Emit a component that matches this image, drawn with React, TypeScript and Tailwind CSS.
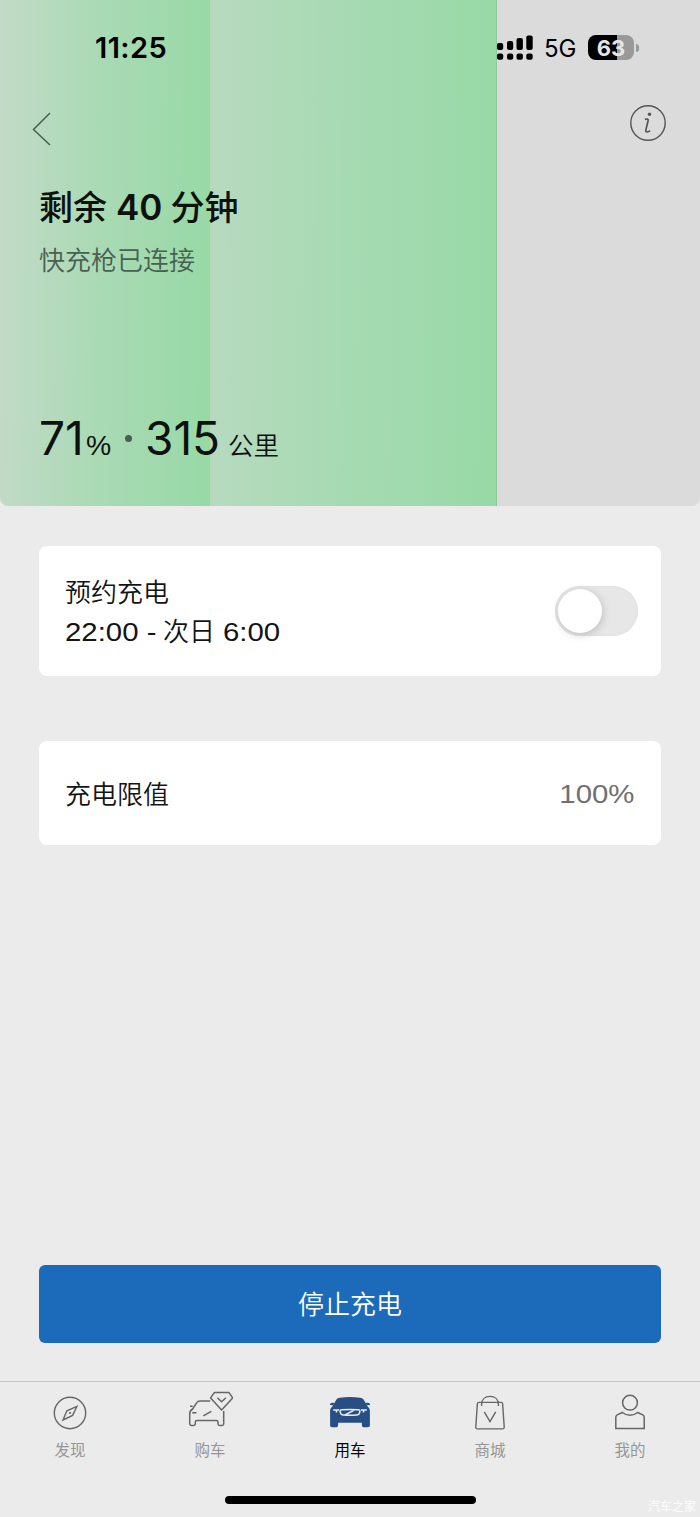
import { useState } from "react";
import type { ReactNode } from "react";
import * as Switch from "@radix-ui/react-switch";
import clsx from "clsx";

const StatusBar = () => {
  return (
    <div className="flex h-[96px] justify-between pl-[95px] pr-[61px] text-black">
      <span className="h-[96px] text-[29px] font-semibold leading-[96px] tracking-[0.4px]">
        11:25
      </span>
      <div className="flex h-[96px] items-center">
        <svg width="37" height="26" viewBox="0 0 37 26" className="mr-[10px]">
          <rect x="0" y="8" width="6.2" height="7" rx="2" />
          <rect x="10" y="6" width="6.2" height="9" rx="2" />
          <rect x="19.5" y="3" width="6.4" height="12" rx="2" />
          <rect x="29.3" y="0.5" width="6.4" height="14.5" rx="2" />
          <rect x="0" y="18.5" width="6.2" height="6.2" rx="2" />
          <rect x="10" y="18.5" width="6.2" height="6.2" rx="2" />
          <rect x="19.5" y="18.5" width="6.4" height="6.2" rx="2" />
          <rect x="29.3" y="18.5" width="6.4" height="6.2" rx="2" />
        </svg>
        <span className="mr-[12px] mt-[2px] w-[32px] text-[24px] leading-6">5G</span>
        <div className="-mt-px flex h-[25px] w-[46px] items-center justify-center rounded-[8px] bg-[linear-gradient(90deg,#000_64%,#999_64%)] text-[22px] font-bold leading-none text-[#e6e6e6]">
          63
        </div>
        <div className="ml-[2px] h-[8px] w-[3px] rounded-r-full bg-[#999]" />
      </div>
    </div>
  );
};

const ChargeHeader = () => {
  return (
    <header className="relative isolate h-[506px] overflow-hidden rounded-b-[8px] bg-[#dbdbdb]">
      {/* battery level behind the texts */}
      <div className="absolute inset-y-0 left-0 -z-10 flex w-[497px]">
        <div className="w-[210px] bg-[linear-gradient(90.5deg,#c3dac8_0%,#a9dab4_48%,#98d9a6_100%)]" />
        <div className="flex-1 border-r border-[#8dc899] bg-[linear-gradient(90.5deg,#b7dabf_0%,#a6dab2_50%,#98d9a6_100%)]" />
      </div>

      <StatusBar />

      <div className="flex h-[60px] items-start justify-between pl-[32px] pr-[34px] text-[#555]">
        <button type="button" aria-label="返回" className="mt-[16px]">
          <svg width="20" height="34" viewBox="0 0 20 34" fill="none" stroke="#486050" strokeWidth="1.5">
            <path d="M18 1 1.5 17.5 18 33" />
          </svg>
        </button>
        <button type="button" aria-label="说明" className="mt-[9px]">
          <svg width="36" height="36" viewBox="0 0 36 36" fill="none" stroke="#555">
            <circle cx="18" cy="18" r="17.2" strokeWidth="1.4" />
            <circle cx="19.5" cy="9.3" r="1.7" fill="#555" stroke="none" />
            <path d="M14.9 14.4c2.4-.8 3.6-.4 3.2 1.3l-2.2 9.2c-.5 2.4 1 2.8 4.2.7" strokeWidth="1.7" />
          </svg>
        </button>
      </div>

      <div className="px-[39px] text-[#0e120f]">
        <h1 className="mt-[27px] flex items-baseline text-[34px] font-medium leading-[48px]">
          <span>剩余</span>
          <span className="ml-[9px] mr-[8px] text-[35px] font-semibold">40</span>
          <span>分钟</span>
        </h1>
        <p className="mt-[11px] text-[26px] font-[350] leading-[36px] text-[#486050]">
          快充枪已连接
        </p>
        <div className="mt-[127px] flex items-baseline leading-[64px]">
          <span className="w-[47px] text-[46px]">71</span>
          <span className="w-[24px] origin-left scale-x-105 font-['Liberation_Sans',sans-serif] text-[27px]">
            %
          </span>
          <span className="ml-[15px] mr-[13px] size-[7px] -translate-y-[13px] rounded-full bg-[#486050]" />
          <span className="w-[75px] text-[46px]">315</span>
          <span className="ml-[8px] text-[25.5px] font-[350]">公里</span>
        </div>
      </div>
    </header>
  );
};

// extended numerals used on the setting cards
const WideText = ({ className, children }: { className?: string; children: ReactNode }) => (
  <span
    className={clsx(
      "inline-block whitespace-pre font-['Liberation_Sans',sans-serif] scale-x-[1.13]",
      className
    )}
  >
    {children}
  </span>
);

const ScheduleCard = () => {
  const [scheduled, setScheduled] = useState(false);

  return (
    <section className="mt-[40px] flex h-[130px] items-center justify-between rounded-[8px] bg-white pl-[26px] pr-[23px]">
      <div className="mt-[2px] text-[26px] leading-[39px] text-[#141414]">
        <p className="font-[350]">预约充电</p>
        <p className="flex items-baseline">
          <WideText className="w-[98px] origin-left">22:00 -</WideText>
          <span className="font-[350]">次日</span>
          <WideText className="ml-[8px] origin-left">6:00</WideText>
        </p>
      </div>
      <Switch.Root
        checked={scheduled}
        onCheckedChange={setScheduled}
        aria-label="预约充电"
        className="h-[50px] w-[83px] rounded-full bg-[#e7e7e7] px-[3px] shadow-[inset_0_0_3px_#dedede] data-[state=checked]:bg-[#1c6bba]"
      >
        <Switch.Thumb className="block size-[44px] rounded-full bg-white shadow-[1px_2px_8px_rgba(0,0,0,0.18)] transition-transform data-[state=checked]:translate-x-[33px]" />
      </Switch.Root>
    </section>
  );
};

const CompassIcon = () => (
  <svg width="46" height="42" viewBox="0 0 46 42" fill="none" stroke="#666" strokeWidth="1.4">
    <circle cx="23" cy="22" r="15.7" />
    <path d="M30 15.3 25.6 24.4 16 29l3.9-9.2Z" />
    <circle cx="23" cy="22" r="1.1" fill="#666" stroke="none" />
  </svg>
);

const BuyCarIcon = () => (
  <svg width="46" height="42" viewBox="0 0 46 42" fill="none" stroke="#666" strokeWidth="1.5" strokeLinejoin="round">
    <path d="M23.2 9.9H13c-1.5 0-2.4.5-3.2 1.8L5.6 18c-1.9 1.2-2.9 2.5-2.9 4.7v10c0 1.2.5 1.7 1.6 1.7h2.5c1.1 0 1.5-.5 1.5-1.7v-1.5c0-1.1.5-1.6 1.6-1.6h19.5c1.1 0 1.6.5 1.6 1.6v1.5c0 1.2.5 1.7 1.6 1.7h2.5c1.1 0 1.6-.5 1.6-1.7V20" />
    <path d="M3 15.2h2.6M5.2 21.8h4.3M16.3 24.8l8-4.5" />
    <path d="M27.5 1.4h14.3l3.9 5.5-11.1 12.2L23.6 6.9Z" />
    <path d="m30.4 6.8 4.2 4 4.3-4" />
  </svg>
);

const MyCarIcon = () => (
  <svg width="46" height="42" viewBox="0 0 46 42" fill="none">
    <path
      d="M13 6.7c6.5-.8 13.5-.8 20 0 1.9.2 2.8.7 3.7 2.1l4.3 7.3c1.3 1 1.9 2.3 1.9 4.3v13.8c0 1.3-.7 2-2 2h-4c-1.2 0-1.8-.6-1.9-1.8l-.2-2.6H11.2l-.2 2.6c-.1 1.2-.7 1.8-1.9 1.8h-4c-1.3 0-2-.7-2-2V20.4c0-2 .6-3.3 1.9-4.3l4.3-7.3c.9-1.4 1.8-1.9 3.7-2.1Z"
      fill="#274f84"
    />
    <path d="M3 14c0-2 1.4-2.8 4.2-2l-1 2.2ZM43 14c0-2-1.4-2.8-4.2-2l1 2.2Z" fill="#274f84" />
    <path d="M6.2 19h6M33.8 19h6M9.5 19.4v2M36.5 19.4v2" stroke="#ebebeb" strokeWidth="1.5" />
    <path d="M14.8 18.7c5.4-.4 11-.4 16.4 0 1.4.1 1.9.9 1.6 2.4-.4 2-1.3 2.9-3 3-4.4.3-9.2.3-13.6 0-1.7-.1-2.6-1-3-3-.3-1.5.2-2.3 1.6-2.4ZM18 24l10-5.4" stroke="#ebebeb" strokeWidth="1.5" />
  </svg>
);

const ShopIcon = () => (
  <svg width="46" height="42" viewBox="0 0 46 42" fill="none" stroke="#666" strokeWidth="1.4">
    <g transform="translate(0 .7)">
      <path d="M11.8 10.7h22.4c.8 0 1.3.4 1.4 1.2l1.6 23.2c.1 1.4-.5 2.1-1.8 2.1H10.6c-1.3 0-1.9-.7-1.8-2.1l1.6-23.2c.1-.8.6-1.2 1.4-1.2Z" />
      <path d="M14.6 14.4v-1.8c0-5 3.6-7.9 8.4-7.9s8.4 2.9 8.4 7.9v1.8" />
      <path d="m17.3 20.2 5.7 9.8 5.7-9.8" />
    </g>
  </svg>
);

const ProfileIcon = () => (
  <svg width="46" height="42" viewBox="0 0 46 42" fill="none" stroke="#666" strokeWidth="1.5">
    <circle cx="23" cy="11.7" r="7.4" />
    <path d="M15.4 21.5c4.4 3.6 10.8 3.6 15.2 0l5.2 2.4c1 .5 1.4 1.1 1.4 2.2v11.3H8.8V26.1c0-1.1.4-1.7 1.4-2.2Z" />
  </svg>
);

type Tab = { label: string; icon: ReactNode; active?: boolean };

const tabs: Tab[] = [
  { label: "发现", icon: <CompassIcon /> },
  { label: "购车", icon: <BuyCarIcon /> },
  { label: "用车", icon: <MyCarIcon />, active: true },
  { label: "商城", icon: <ShopIcon /> },
  { label: "我的", icon: <ProfileIcon /> },
];

const TabBar = () => {
  return (
    <nav className="relative h-[136px] border-t border-[#c3c3c3]">
      <div className="grid grid-cols-5 pt-[9px]">
        {tabs.map((tab) => (
          <button
            key={tab.label}
            type="button"
            className={clsx(
              "flex flex-col items-center text-[15.5px] leading-[24px]",
              tab.active ? "text-black" : "text-[#969696]"
            )}
          >
            {tab.icon}
            <span className="mt-[6px]">{tab.label}</span>
          </button>
        ))}
      </div>
      <div className="mx-auto mt-[33px] h-[8px] w-[251px] rounded-full bg-black" />
      <span className="absolute bottom-px right-[4px] text-[12px] font-[350] leading-[18px] text-white">
        汽车之家
      </span>
    </nav>
  );
};

const App = () => {
  return (
    <div className="flex h-[1517px] w-[700px] flex-col overflow-hidden bg-[#ebebeb] font-[Inter,'Noto_Sans_CJK_SC',sans-serif]">
      <ChargeHeader />
      <main className="flex flex-1 flex-col px-[39px]">
        <ScheduleCard />
        <section className="mt-[65px] flex h-[104px] items-center justify-between rounded-[8px] bg-white pl-[26px] pr-[27px] pt-[2px] text-[26px]">
          <span className="font-[350] text-[#141414]">充电限值</span>
          <WideText className="origin-right text-[#707070]">100%</WideText>
        </section>
        <button
          type="button"
          className="mb-[38px] mt-auto h-[78px] rounded-[6px] bg-[#1c6bba] pt-px text-[26px] font-[350] text-white"
        >
          停止充电
        </button>
      </main>
      <TabBar />
    </div>
  );
};

export default App;
